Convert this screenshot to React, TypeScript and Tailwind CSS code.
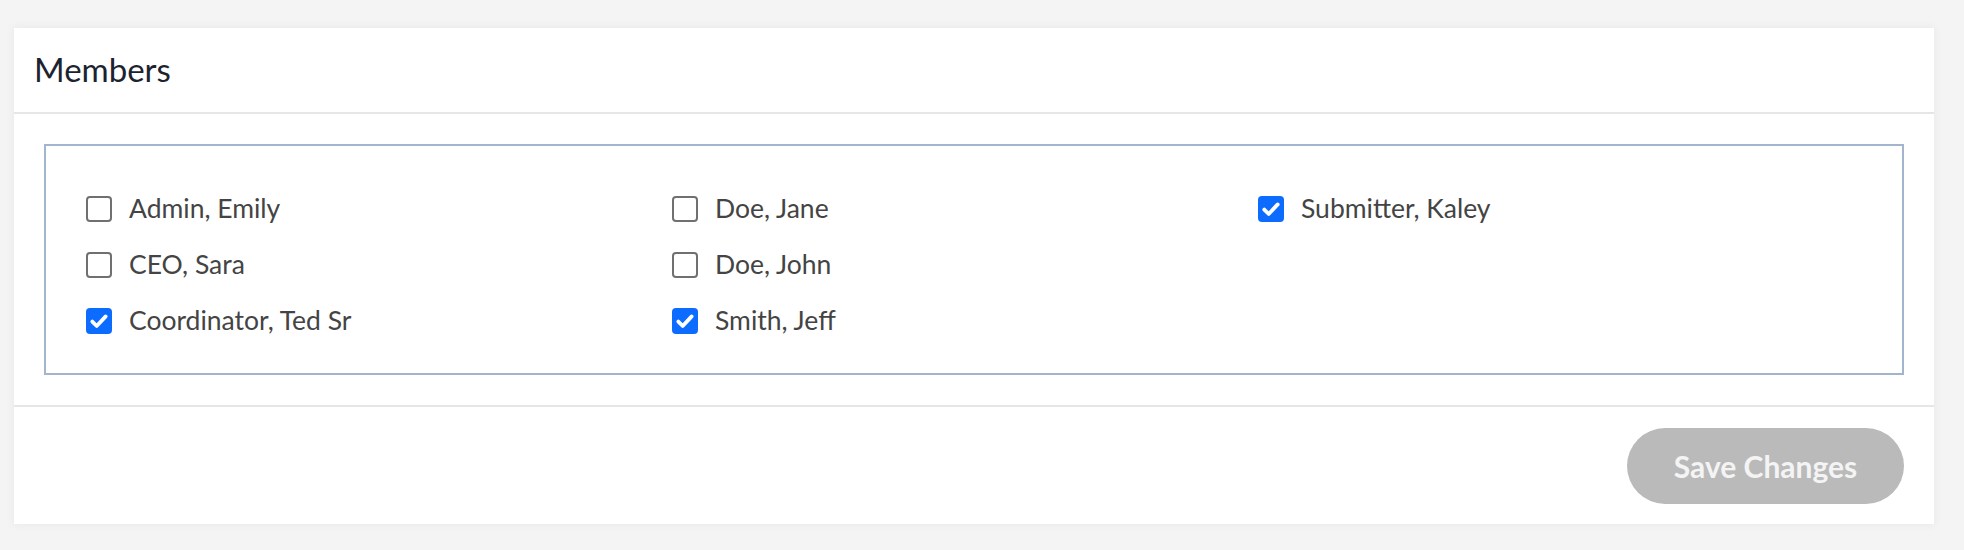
import React, { useState } from 'react';

interface Member {
  id: number;
  name: string;
  checked: boolean;
}

const initialMembers: Member[] = [
  { id: 1, name: 'Admin, Emily', checked: false },
  { id: 2, name: 'CEO, Sara', checked: false },
  { id: 3, name: 'Coordinator, Ted Sr', checked: true },
  { id: 4, name: 'Doe, Jane', checked: false },
  { id: 5, name: 'Doe, John', checked: false },
  { id: 6, name: 'Smith, Jeff', checked: true },
  { id: 7, name: 'Submitter, Kaley', checked: true },
];

const Checkbox: React.FC<{ checked: boolean }> = ({ checked }) =>
  checked ? (
    <span className="flex h-[26px] w-[26px] shrink-0 items-center justify-center rounded-[4px] bg-[#0b6cff]">
      <svg viewBox="0 0 26 26" className="h-[26px] w-[26px]" fill="none">
        <path d="M6.3 13.6l4.4 4.4 9-9.6" stroke="#fff" strokeWidth="3.8" strokeLinecap="round" strokeLinejoin="round" />
      </svg>
    </span>
  ) : (
    <span className="h-[26px] w-[26px] shrink-0 rounded-[4px] border-2 border-[#707070] bg-white" />
  );

const App: React.FC = () => {
  const [members, setMembers] = useState<Member[]>(initialMembers);

  const toggle = (id: number) => {
    setMembers(members.map((m) => (m.id === id ? { ...m, checked: !m.checked } : m)));
  };

  return (
    <div className="min-h-[550px] bg-[#f4f4f4] pt-[28px] pl-[14px] font-['Lato',sans-serif]">
      <div className="w-[1920px] bg-white shadow-[0_0_10px_rgba(0,0,0,0.06)]">
        {/* Header */}
        <div className="flex h-[86px] items-center border-b-2 border-[#e6e6e6] px-[20px]">
          <h2 className="text-[33px] text-[#1c2330]">Members</h2>
        </div>

        {/* Members list */}
        <div className="border-b-2 border-[#e6e6e6] p-[30px]">
          <div className="border-2 border-[#a3b5cc] pt-[43px] pb-[32px] pl-[40px]">
            <div className="grid grid-flow-col grid-rows-3 grid-cols-[repeat(3,586px)] gap-y-[16px]">
              {members.map((m) => (
                <label
                  key={m.id}
                  onClick={() => toggle(m.id)}
                  className="flex h-[40px] cursor-pointer items-center gap-[17px] text-[26.5px] text-[#444444]"
                >
                  <Checkbox checked={m.checked} />
                  <span>{m.name}</span>
                </label>
              ))}
            </div>
          </div>
        </div>

        {/* Footer */}
        <div className="flex justify-end px-[30px] pt-[21px] pb-[20px]">
          <button
            disabled
            className="h-[76px] w-[277px] rounded-full bg-[#bababa] text-[30px] font-bold text-[#f4f4f4]"
          >
            Save Changes
          </button>
        </div>
      </div>
    </div>
  );
};

export default App;
